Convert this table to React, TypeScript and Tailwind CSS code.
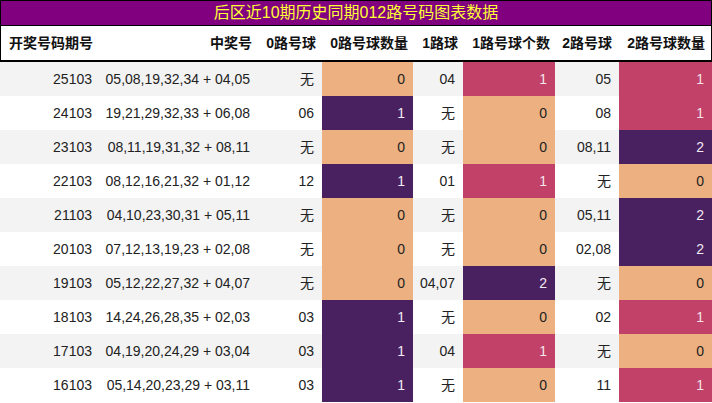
import React from "react";

type Cell = { v: string; c: "o" | "p" | "v" };

const rows: [string, string, string, Cell, string, Cell, string, Cell][] = [
  ["25103", "05,08,19,32,34 + 04,05", "无", { v: "0", c: "o" }, "04", { v: "1", c: "p" }, "05", { v: "1", c: "p" }],
  ["24103", "19,21,29,32,33 + 06,08", "06", { v: "1", c: "v" }, "无", { v: "0", c: "o" }, "08", { v: "1", c: "p" }],
  ["23103", "08,11,19,31,32 + 08,11", "无", { v: "0", c: "o" }, "无", { v: "0", c: "o" }, "08,11", { v: "2", c: "v" }],
  ["22103", "08,12,16,21,32 + 01,12", "12", { v: "1", c: "v" }, "01", { v: "1", c: "p" }, "无", { v: "0", c: "o" }],
  ["21103", "04,10,23,30,31 + 05,11", "无", { v: "0", c: "o" }, "无", { v: "0", c: "o" }, "05,11", { v: "2", c: "v" }],
  ["20103", "07,12,13,19,23 + 02,08", "无", { v: "0", c: "o" }, "无", { v: "0", c: "o" }, "02,08", { v: "2", c: "v" }],
  ["19103", "05,12,22,27,32 + 04,07", "无", { v: "0", c: "o" }, "04,07", { v: "2", c: "v" }, "无", { v: "0", c: "o" }],
  ["18103", "14,24,26,28,35 + 02,03", "03", { v: "1", c: "v" }, "无", { v: "0", c: "o" }, "02", { v: "1", c: "p" }],
  ["17103", "04,19,20,24,29 + 03,04", "03", { v: "1", c: "v" }, "04", { v: "1", c: "p" }, "无", { v: "0", c: "o" }],
  ["16103", "05,14,20,23,29 + 03,11", "03", { v: "1", c: "v" }, "无", { v: "0", c: "o" }, "11", { v: "1", c: "p" }],
];

const heat = {
  o: "bg-[#ecb081] text-[#222]",
  p: "bg-[#c14168] text-[#f4e4ea]",
  v: "bg-[#4a2160] text-[#f1e9f4]",
};

const cols = "grid grid-cols-[100px_160px_62px_91px_50px_92px_64px_93px]";

const HeatCell = ({ cell }: { cell: Cell }) => (
  <div className={`flex items-center justify-end pr-2 ${heat[cell.c]}`}>{cell.v}</div>
);

const App = () => {
  return (
    <div
      className="w-[712px] h-[403px] bg-white overflow-hidden text-[14px] text-[#222]"
      style={{ fontFamily: '"Liberation Sans", "Noto Sans CJK SC", sans-serif' }}
    >
      <div className="h-[26px] bg-[#800080] border border-black flex items-center justify-center text-[16px] text-[#ffff33]">
        后区近10期历史同期012路号码图表数据
      </div>
      <div className={`${cols} h-[36px] border-x border-b-2 border-black font-bold text-[#111]`}>
        <div className="flex items-center pl-[8px]">开奖号码期号</div>
        <div className="flex items-center justify-end pr-[9px]">中奖号</div>
        <div className="flex items-center justify-end pr-[7px]">0路号球</div>
        <div className="flex items-center justify-end pr-[6px]">0路号球数量</div>
        <div className="flex items-center justify-end pr-[6px]">1路球</div>
        <div className="flex items-center justify-end pr-[6px]">1路号球个数</div>
        <div className="flex items-center justify-end pr-[8px]">2路号球</div>
        <div className="flex items-center justify-end pr-[8px]">2路号球数量</div>
      </div>
      {rows.map((r, i) => (
        <div
          key={r[0]}
          className={`${cols} h-[34px] ${i % 2 === 0 ? "bg-[#f3f3f3]" : "bg-white"}`}
        >
          <div className="flex items-center justify-end pr-2">{r[0]}</div>
          <div className="flex items-center justify-end pr-[10px]">{r[1]}</div>
          <div className="flex items-center justify-end pr-2">{r[2]}</div>
          <HeatCell cell={r[3]} />
          <div className="flex items-center justify-end pr-2">{r[4]}</div>
          <HeatCell cell={r[5]} />
          <div className="flex items-center justify-end pr-2">{r[6]}</div>
          <HeatCell cell={r[7]} />
        </div>
      ))}
    </div>
  );
};

export default App;
